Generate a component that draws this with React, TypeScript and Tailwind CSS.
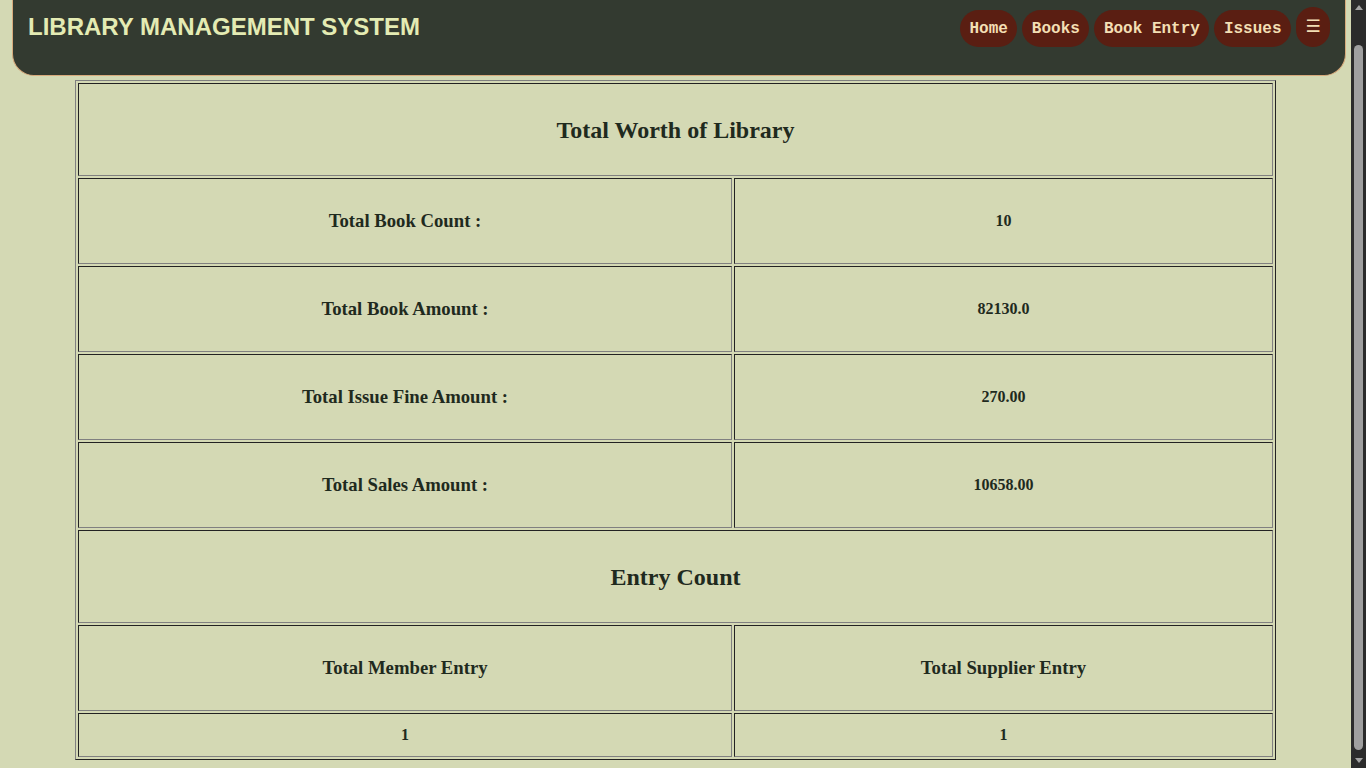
const totals = [
  { label: "Total Book Count :", value: "10" },
  { label: "Total Book Amount :", value: "82130.0" },
  { label: "Total Issue Fine Amount :", value: "270.00" },
  { label: "Total Sales Amount :", value: "10658.00" },
];

const navItems = ["Home", "Books", "Book Entry", "Issues"];

const cell =
  "border border-t-[#222] border-l-[#222] border-r-[#808080] border-b-[#808080] p-0 text-center align-middle";

function ScrollBar() {
  return (
    <aside className="flex h-screen w-[15px] shrink-0 flex-col bg-[#2b2b2b]">
      <div className="flex h-[15px] items-center justify-center">
        <svg width="8" height="5" viewBox="0 0 8 5">
          <path d="M4 0 L8 5 L0 5 Z" fill="#a3a3a3" />
        </svg>
      </div>
      <div className="flex-1 px-[3px] pt-[30px] pb-[3px]">
        <div className="h-full rounded-full bg-[#9f9f9f]" />
      </div>
      <div className="flex h-[15px] items-center justify-center">
        <svg width="8" height="5" viewBox="0 0 8 5">
          <path d="M0 0 L8 0 L4 5 Z" fill="#a3a3a3" />
        </svg>
      </div>
    </aside>
  );
}

export default function App() {
  return (
    <div className="flex h-screen overflow-hidden bg-[#d4d9b4] text-[#1f2a1e]">
      <main className="flex-1">
        <header className="ml-[12px] mr-[5px] flex h-[76px] items-start justify-between rounded-b-[22px] border border-t-0 border-[#d8aa7c] bg-[#333a30] pl-[15px] pr-[15px]">
          <h1 className="pt-[9px] font-['Liberation_Sans',Arial,sans-serif] text-[24px] font-bold text-[#e4ebb3]">
            LIBRARY MANAGEMENT SYSTEM
          </h1>
          <nav className="flex items-start gap-[5px] pt-[7px]">
            {navItems.map((item) => (
              <a
                key={item}
                href="#"
                className="mt-[3px] flex h-[37px] items-center rounded-full bg-[#5a1e12] px-[9.5px] font-['Liberation_Mono','Courier_New',monospace] text-[16px] font-bold whitespace-pre text-[#f3dfb4]"
              >
                {item}
              </a>
            ))}
            <button className="flex h-[40px] w-[34px] items-center justify-center rounded-full bg-[#5a1e12] font-['DejaVu_Sans',sans-serif] text-[17px] text-[#f3dfb4]">
              ☰
            </button>
          </nav>
        </header>

        <table className="mx-auto mt-[4px] w-[1201px] table-fixed border-separate border-spacing-[2px] border border-t-[#808080] border-l-[#808080] border-r-[#222] border-b-[#222] font-['Liberation_Serif','Times_New_Roman',serif] font-bold">
          <colgroup>
            <col className="w-[654px]" />
            <col className="w-[539px]" />
          </colgroup>
          <tbody>
            <tr>
              <td colSpan={2} className={`${cell} h-[93px] text-[24px]`}>
                Total Worth of Library
              </td>
            </tr>
            {totals.map((row) => (
              <tr key={row.label}>
                <td className={`${cell} h-[86px] text-[18.72px]`}>{row.label}</td>
                <td className={`${cell} h-[86px] text-[16px]`}>{row.value}</td>
              </tr>
            ))}
            <tr>
              <td colSpan={2} className={`${cell} h-[93px] text-[24px]`}>
                Entry Count
              </td>
            </tr>
            <tr>
              <td className={`${cell} h-[86px] text-[18.72px]`}>Total Member Entry</td>
              <td className={`${cell} h-[86px] text-[18.72px]`}>Total Supplier Entry</td>
            </tr>
            <tr>
              <td className={`${cell} h-[44px] text-[16px]`}>1</td>
              <td className={`${cell} h-[44px] text-[16px]`}>1</td>
            </tr>
          </tbody>
        </table>
      </main>
      <ScrollBar />
    </div>
  );
}
